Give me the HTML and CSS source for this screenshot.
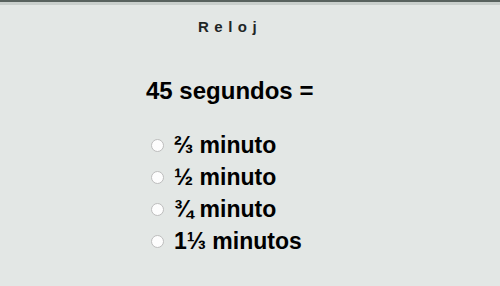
FILE: index.html
```
<!DOCTYPE html>
<html lang="es">
<head>
<meta charset="utf-8">
<link rel="stylesheet" href="styles.css">
</head>
<body>
<div class="topbar"></div>
<div class="page">
  <h1 class="title">Reloj</h1>
  <div class="quiz">
    <p class="question">45 segundos =</p>
    <ul class="options">
      <li class="option"><span class="radio"></span><span class="label">⅔ minuto</span></li>
      <li class="option"><span class="radio"></span><span class="label">½ minuto</span></li>
      <li class="option"><span class="radio"></span><span class="label">¾ minuto</span></li>
      <li class="option"><span class="radio"></span><span class="label">1⅓ minutos</span></li>
    </ul>
  </div>
</div>
</body>
</html>
```
FILE: styles.css
```
html, body {
  margin: 0;
  padding: 0;
  background: #e3e7e5;
  font-family: "Liberation Sans", Arial, sans-serif;
  color: #000;
}
.topbar {
  height: 2px;
  background: #58625e;
  border-bottom: 3px solid #c9cfcc;
}
.page {
  width: 500px;
}
.title {
  margin: 14px 0 0 198px;
  font-size: 15px;
  font-weight: bold;
  letter-spacing: 5.5px;
  color: #1f2626;
  line-height: 16px;
}
.quiz {
  margin: 0 0 0 146px;
}
.question {
  margin: 42px 0 0 0;
  font-size: 24px;
  font-weight: bold;
  line-height: 28px;
}
.options {
  list-style: none;
  margin: 24px 0 0 0;
  padding: 0;
}
.option {
  display: flex;
  align-items: center;
  height: 32px;
}
.radio {
  width: 11px;
  height: 11px;
  border: 1px solid #bdbdbd;
  border-radius: 50%;
  background: #fdfdfd;
  margin: 0 10px 0 5px;
}
.label {
  font-size: 23px;
  font-weight: bold;
  line-height: 28px;
}
```
